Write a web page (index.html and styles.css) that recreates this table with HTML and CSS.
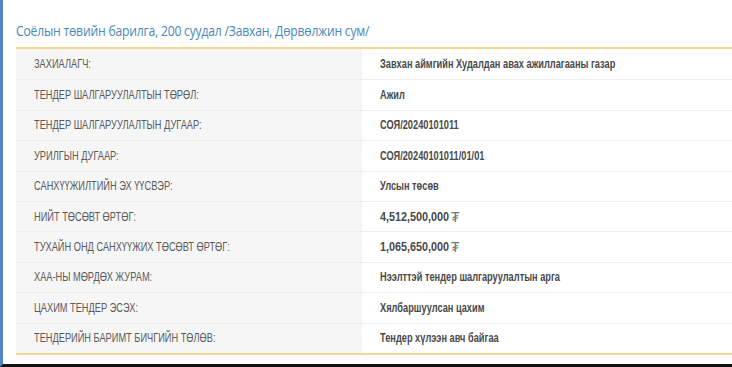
FILE: index.html
```html
<!DOCTYPE html>
<html>
<head>
<meta charset="utf-8">
<link rel="stylesheet" href="styles.css">
</head>
<body>
<div class="frame">
  <div class="content">
    <h1 class="title"><span class="narrow-title">Соёлын төвийн барилга, 200 суудал /Завхан, Дөрвөлжин сум/</span></h1>
    <div class="table">
      <div class="row"><div class="label"><span class="narrow">ЗАХИАЛАГЧ:</span></div><div class="value"><span class="narrow">Завхан аймгийн Худалдан авах ажиллагааны газар</span></div></div>
      <div class="row"><div class="label"><span class="narrow">ТЕНДЕР ШАЛГАРУУЛАЛТЫН ТӨРӨЛ:</span></div><div class="value"><span class="narrow">Ажил</span></div></div>
      <div class="row"><div class="label"><span class="narrow">ТЕНДЕР ШАЛГАРУУЛАЛТЫН ДУГААР:</span></div><div class="value"><span class="narrow">СОЯ/20240101011</span></div></div>
      <div class="row"><div class="label"><span class="narrow">УРИЛГЫН ДУГААР:</span></div><div class="value"><span class="narrow">СОЯ/20240101011/01/01</span></div></div>
      <div class="row"><div class="label"><span class="narrow">САНХҮҮЖИЛТИЙН ЭХ ҮҮСВЭР:</span></div><div class="value"><span class="narrow">Улсын төсөв</span></div></div>
      <div class="row"><div class="label"><span class="narrow">НИЙТ ТӨСӨВТ ӨРТӨГ:</span></div><div class="value"><span class="amount">4,512,500,000</span><span class="cur">₮</span></div></div>
      <div class="row"><div class="label"><span class="narrow">ТУХАЙН ОНД САНХҮҮЖИХ ТӨСӨВТ ӨРТӨГ:</span></div><div class="value"><span class="amount">1,065,650,000</span><span class="cur">₮</span></div></div>
      <div class="row"><div class="label"><span class="narrow">ХАА-НЫ МӨРДӨХ ЖУРАМ:</span></div><div class="value"><span class="narrow">Нээлттэй тендер шалгаруулалтын арга</span></div></div>
      <div class="row"><div class="label"><span class="narrow">ЦАХИМ ТЕНДЕР ЭСЭХ:</span></div><div class="value"><span class="narrow">Хялбаршуулсан цахим</span></div></div>
      <div class="row"><div class="label"><span class="narrow">ТЕНДЕРИЙН БАРИМТ БИЧГИЙН ТӨЛӨВ:</span></div><div class="value"><span class="narrow">Тендер хүлээн авч байгаа</span></div></div>
    </div>
  </div>
</div>
</body>
</html>
```
FILE: styles.css
```css
html, body {
  margin: 0;
  padding: 0;
  background: #ffffff;
}
body {
  width: 732px;
  height: 367px;
  overflow: hidden;
  font-family: "Liberation Sans", Arial, sans-serif;
}
.frame {
  height: 364px;
  border-left: 3px solid #4f85c2;
  border-bottom: 3px solid #111;
  box-sizing: content-box;
}
.content {
  padding: 20px 0 0 13px;
}
.title {
  margin: 0 0 7px 0;
  font-family: "Open Sans", sans-serif;
  font-weight: 400;
  font-size: 15px;
  line-height: 20px;
  color: #4a87b9;
  white-space: nowrap;
}
.narrow-title {
  display: inline-block;
  transform: scaleX(0.81);
  transform-origin: left center;
  letter-spacing: -0.25px;
}
.table {
  border-top: 2px solid #f3d98f;
  border-bottom: 2px solid #f3d98f;
}
.row {
  display: flex;
  height: 30.4px;
  border-top: 1px solid #eeeeee;
  box-sizing: border-box;
}
.row:first-child {
  border-top: none;
}
.label {
  width: 346px;
  background: #f6f6f6;
  padding-left: 18px;
  box-sizing: border-box;
  display: flex;
  align-items: center;
  font-size: 12px;
  color: #5a5a5a;
  white-space: nowrap;
}
.value {
  flex: 1;
  padding-left: 18px;
  display: flex;
  align-items: center;
  font-size: 12px;
  font-weight: 700;
  color: #4a4a4a;
  white-space: nowrap;
}
.narrow {
  display: inline-block;
  transform: scaleX(0.77);
  transform-origin: left center;
}
.amount {
  display: inline-block;
  width: 72px;
  transform: scaleX(0.9);
  transform-origin: left center;
}
.cur {
  font-weight: 400;
  font-size: 14px;
  margin-left: -1px;
  color: #777777;
}
```
